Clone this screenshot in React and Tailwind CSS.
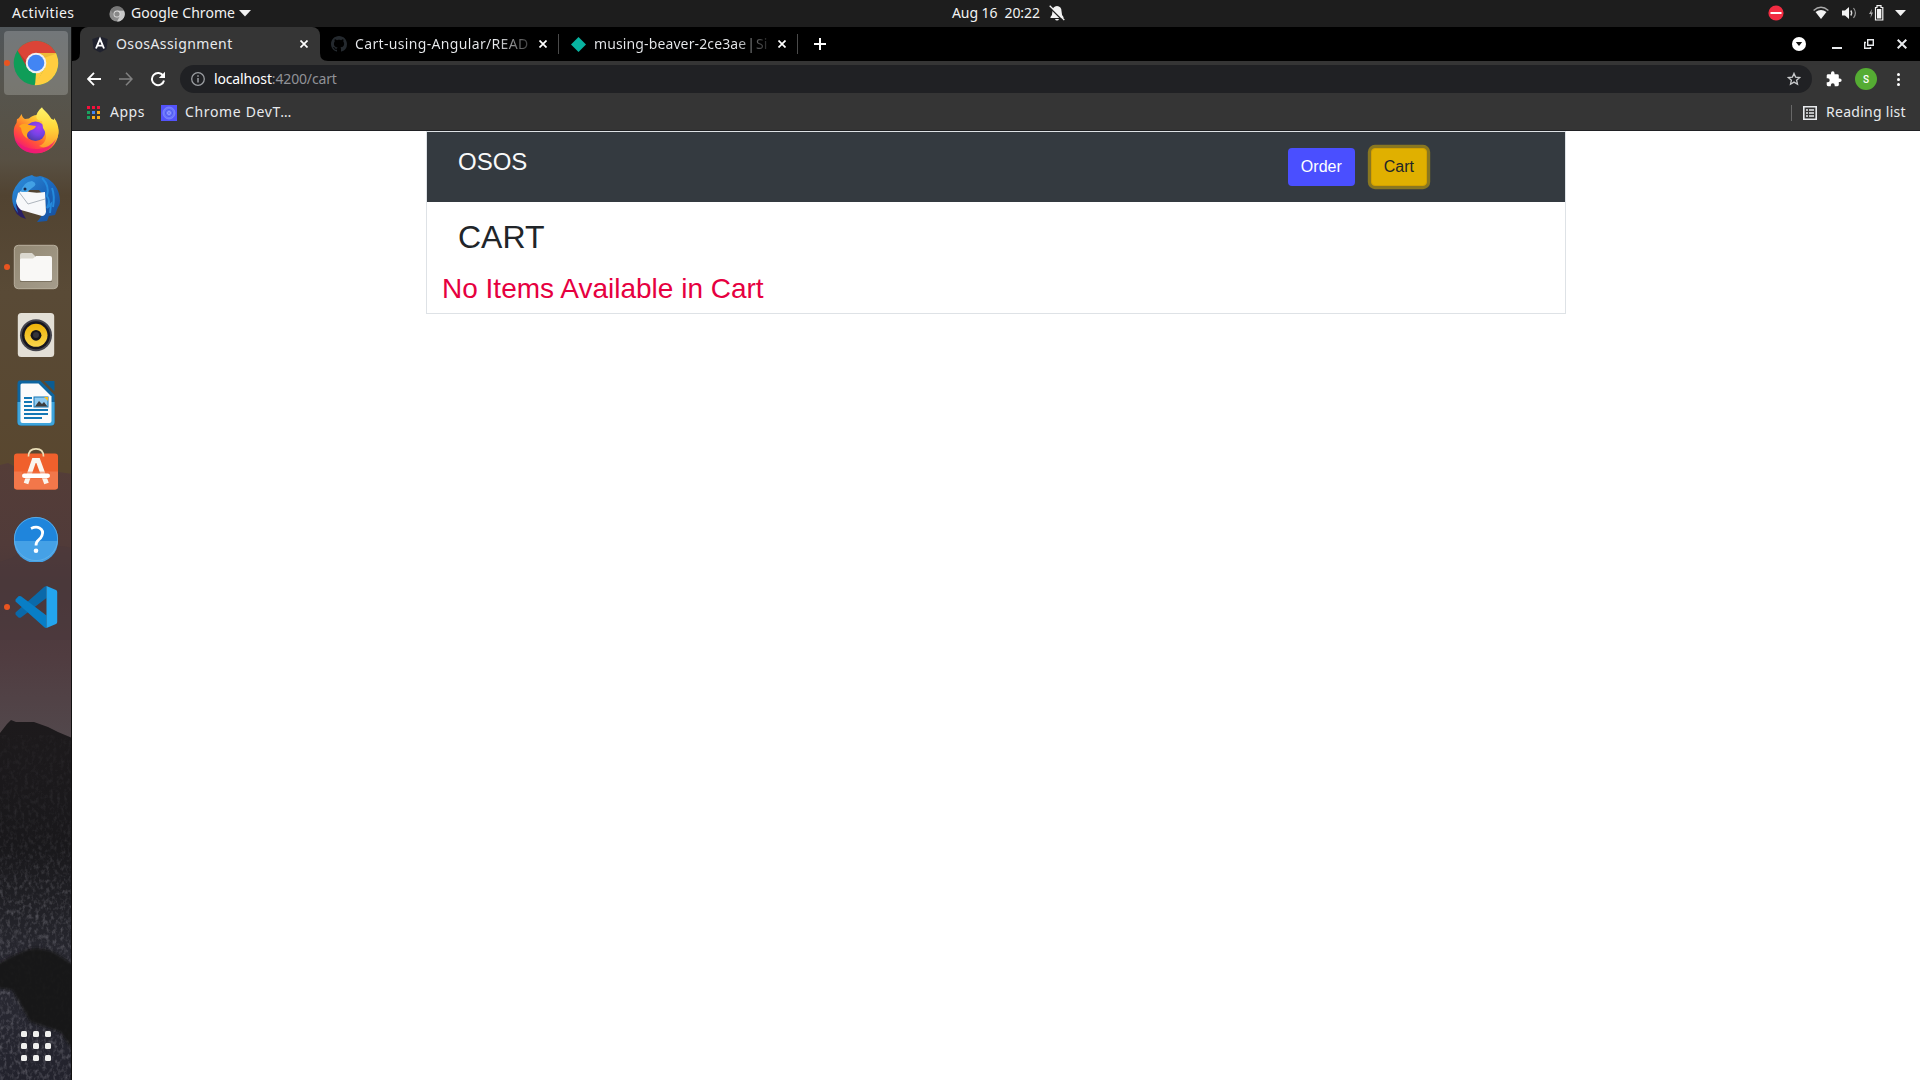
import React from "react";

const ui = "font-['Noto_Sans',sans-serif]";

function Wallpaper() {
  return (
    <svg className="absolute inset-0" width="72" height="1053" viewBox="0 27 72 1053" preserveAspectRatio="none">
      <defs>
        <linearGradient id="sky" x1="0" y1="27" x2="0" y2="470" gradientUnits="userSpaceOnUse">
          <stop offset="0" stopColor="#50565a" />
          <stop offset="0.13" stopColor="#56554e" />
          <stop offset="0.3" stopColor="#585043" />
          <stop offset="0.38" stopColor="#514331" />
          <stop offset="0.6" stopColor="#594a36" />
          <stop offset="1" stopColor="#59472f" />
        </linearGradient>
        <linearGradient id="haze" x1="0" y1="460" x2="0" y2="740" gradientUnits="userSpaceOnUse">
          <stop offset="0" stopColor="#543d38" />
          <stop offset="0.3" stopColor="#513b39" />
          <stop offset="0.45" stopColor="#4a3839" />
          <stop offset="0.7" stopColor="#503c40" />
          <stop offset="1" stopColor="#52484c" />
        </linearGradient>
        <linearGradient id="rock" x1="0" y1="720" x2="0" y2="1080" gradientUnits="userSpaceOnUse">
          <stop offset="0" stopColor="#1d1a1c" />
          <stop offset="0.35" stopColor="#19181b" />
          <stop offset="0.55" stopColor="#222228" />
          <stop offset="0.7" stopColor="#2a2a33" />
          <stop offset="1" stopColor="#22222c" />
        </linearGradient>
        <linearGradient id="fade" x1="0" y1="735" x2="0" y2="1080" gradientUnits="userSpaceOnUse">
          <stop offset="0" stopColor="#fff" stopOpacity=".08" />
          <stop offset="0.3" stopColor="#fff" stopOpacity=".2" />
          <stop offset="0.5" stopColor="#fff" stopOpacity=".5" />
          <stop offset="1" stopColor="#fff" stopOpacity=".55" />
        </linearGradient>
        <mask id="grainMask"><rect y="735" width="72" height="345" fill="url(#fade)" /></mask>
        <filter id="grain" x="0" y="0" width="100%" height="100%">
          <feTurbulence type="fractalNoise" baseFrequency="0.28 0.2" numOctaves="3" seed="4" />
          <feColorMatrix values="0 0 0 0 0.42  0 0 0 0 0.41  0 0 0 0 0.46  1.5 0 0 0 -0.68" />
        </filter>
        <filter id="soft"><feGaussianBlur stdDeviation="1.6" /></filter>
      </defs>
      <rect y="27" width="72" height="453" fill="url(#sky)" />
      <path d="M0 465 L8 463 L14 466 L30 470 L45 470 L72 474 V760 H0Z" fill="url(#haze)" />
      <path d="M0 562 L12 558 L20 553 L50 550 L60 546 L72 548 V640 H0Z" fill="#4a373b" opacity=".5" />
      <path d="M0 733 L7 724 L11 720 L16 722 L34 722 L48 727 L58 732 L72 738 V1080 H0Z" fill="url(#rock)" />
      <g mask="url(#grainMask)"><rect y="735" width="72" height="345" filter="url(#grain)" /></g>
      <path d="M-4 964 L12 956 L28 949 L38 948 L52 951 L62 957 L76 966 V1055 L60 1032 L30 1022 L20 1004 L12 990 L-4 988Z" fill="#181719" opacity=".92" filter="url(#soft)" />
    </svg>
  );
}

function ChromeIcon() {
  return (
    <svg width="46" height="46" viewBox="-23 -23 46 46">
      <defs>
        <clipPath id="cc"><circle r="22.3" /></clipPath>
        <linearGradient id="cr" x1="0" y1="0" x2="0" y2="1"><stop stopColor="#db4437" /><stop offset=".7" stopColor="#db4437" /><stop offset="1" stopColor="#bf3a2e" /></linearGradient>
      </defs>
      <g clipPath="url(#cc)">
        <rect x="-23" y="-23" width="46" height="46" fill="#0f9d58" />
        <path d="M0 -10 H23 V23 H-2 L8.7 5Z" fill="#ffcd40" />
        <path d="M-1 23 L8.7 5 L0 10 L-1 23Z" fill="#ffcd40" />
        <path d="M-23 -23 H23 V-10 H0 L-8.7 5 L-18.2 -12Z" fill="url(#cr)" />
        <path d="M0 -10 H22 L8 -5Z" fill="#d9a52e" opacity=".45" />
        <path d="M-18.2 -12 L-8.7 5 L-10 -2Z" fill="#8e2b22" opacity=".4" />
      </g>
      <circle r="10.3" fill="#f1f1f1" />
      <circle r="8.3" fill="#4285f4" />
    </svg>
  );
}

function FirefoxIcon() {
  return (
    <svg width="48" height="48" viewBox="12 107 48 48">
      <defs>
        <linearGradient id="ff1" x1=".85" y1=".1" x2=".2" y2=".95"><stop stopColor="#fff44f" /><stop offset=".3" stopColor="#ffb52e" /><stop offset=".58" stopColor="#ff6a2b" /><stop offset=".8" stopColor="#ff3750" /><stop offset="1" stopColor="#e31587" /></linearGradient>
        <radialGradient id="ff2" cx=".65" cy=".3" r=".8"><stop stopColor="#a73df5" /><stop offset=".5" stopColor="#7542e5" /><stop offset="1" stopColor="#483a9e" /></radialGradient>
        <linearGradient id="ff3" x1="0" y1="0" x2="0" y2="1"><stop stopColor="#fff36b" /><stop offset=".5" stopColor="#ffd83a" /><stop offset="1" stopColor="#ff9a2a" /></linearGradient>
      </defs>
      <path d="M21.5 114 Q22.5 118 25 119 L29 118.5 Q33 114.5 38 115 L47 117 L54 120 Q59 127 58.5 133 C57.5 145 48 153.3 36 153.3 C23 153.3 14 144 13.8 132 C13.5 128 15 125 16.5 123 L17 119 Q19 119 21.5 114Z" fill="url(#ff1)" />
      <circle cx="35.5" cy="131.3" r="9.8" fill="url(#ff2)" />
      <path d="M42 107.2 C43 110 51 115 52.5 122 Q54 122 54 118 C60 125 60 137 54 143 C51 146 46 149 39 146 C47 143 48 135 43 128 L42 121 C35 121 34 114 42 107.2Z" fill="url(#ff3)" />
      <path d="M19 126 Q24 122 29 125 L36 126 Q35 129 30 130.5 Q25 134 28 139 Q22 136 21 128Z" fill="#ffa51f" />
      <path d="M14.5 139 Q24 150 38 149 Q50 148 56 139 Q50 153.3 36 153.3 Q20 153 14.5 139Z" fill="#ed1579" opacity=".75" />
    </svg>
  );
}

function ThunderbirdIcon() {
  return (
    <svg width="50" height="50" viewBox="11 174 50 50">
      <defs>
        <linearGradient id="tb" x1="0" y1="0" x2="1" y2="1"><stop stopColor="#2f91dc" /><stop offset=".5" stopColor="#1c68bd" /><stop offset="1" stopColor="#164c99" /></linearGradient>
      </defs>
      <path d="M20 185 Q12 194 13 204 Q14 216 26 219 L22 212Z" fill="#2a1f62" />
      <path d="M26 177 L32 175 Q35 178 40 176 C52 178 60 189 60 201 C60 205 58 207 58 207 L55 215 L49 216 L47 221 L37 222 L46 210 Q45 195 39 190 L29 190 L21 195 L16 205 L18 213 Q10 204 13 192 Q18 180 26 177Z" fill="url(#tb)" />
      <path d="M18 193 L23 190 Q32 194 45 192 L46 212 Q45 216 42 216 L21 210 Q17 207 16 201Z" fill="#f7f8fa" />
      <path d="M19 192 L28 204 L45 199" fill="none" stroke="#aeb5bd" strokeWidth="1" />
      <path d="M21 192 Q23 182 32 181 Q39 184 32 188 L27 192Z" fill="#42a1e5" />
      <circle cx="25" cy="189" r="1.5" fill="#192747" />
      <path d="M42 178 Q50 186 47 196 Q51 201 47 208 L51 204 L50 213 M52 188 Q55 196 53 207" fill="none" stroke="#258adc" strokeWidth="2" />
    </svg>
  );
}

function FilesIcon() {
  return (
    <svg width="46" height="46" viewBox="13 244 46 46">
      <defs><linearGradient id="fi" x1="0" y1="0" x2="1" y2="1"><stop stopColor="#928873" /><stop offset="1" stopColor="#a59c8b" /></linearGradient></defs>
      <rect x="14.3" y="245.3" width="43.4" height="43.4" rx="4" fill="url(#fi)" stroke="#b9b09e" strokeWidth="1" />
      <path d="M20 256 V255 Q20 253 22 253 H32 L35 256 V262 H20Z" fill="#dbd8cf" />
      <path d="M20 260 Q20 258 22 258.500 H33 L36 256 H50 Q52 256 52 258 V279 Q52 281 50 281 H22 Q20 281 20 279Z" fill="#f9f8f6" />
      <path d="M20 281.500 H52" stroke="#6e6554" opacity=".7" />
    </svg>
  );
}

function RhythmboxIcon() {
  return (
    <svg width="40" height="46" viewBox="16 312 40 46">
      <defs><linearGradient id="rb" x1="0" y1="0" x2="0" y2="1"><stop stopColor="#eeb208" /><stop offset="1" stopColor="#fad64c" /></linearGradient></defs>
      <rect x="17.800" y="313" width="36.400" height="44" rx="3.500" fill="#e3dfd6" />
      <circle cx="36" cy="335.300" r="16" fill="#45454d" />
      <circle cx="36" cy="335.300" r="14" fill="#17161f" />
      <circle cx="36" cy="335.300" r="11.500" fill="url(#rb)" />
      <circle cx="36" cy="335.300" r="5.400" fill="#15151a" />
      <circle cx="36" cy="335" r="3" fill="#34343a" />
    </svg>
  );
}

function WriterIcon() {
  return (
    <svg width="40" height="48" viewBox="16 379 40 48">
      <path d="M20 380.500 H40 L54.500 395 V422 Q54.500 425.500 51 425.500 H21 Q17.500 425.500 17.500 422 V384 Q17.500 380.500 20 380.500Z" fill="#0d65a0" />
      <path d="M17.500 402 H54.500 V422 Q54.500 425.500 51 425.500 H21 Q17.500 425.500 17.500 422Z" fill="#3da4dc" />
      <path d="M44 381 H54.500 V391.500Z" fill="#0b5c92" />
      <path d="M20.500 385 Q20.500 383.500 22 383.500 H38.500 L51.500 396.500 V421 Q51.500 423 49.500 423 H22.500 Q20.500 423 20.500 421Z" fill="#fbfbfb" />
      <path d="M24 398 H32 M24 402 H32 M24 406 H32 M24 410 H48 M24 414 H48 M24 418 H42" stroke="#1377b5" strokeWidth="1.800" />
      <rect x="34" y="397" width="14" height="10" fill="#8fcaf0" stroke="#1377b5" />
      <path d="M35 406.500 L39 401 L42 404 L44 402 L47.500 406.500Z" fill="#3d3d3d" />
      <path d="M44 397 H48 V401Z" fill="#f7be20" />
    </svg>
  );
}

function SoftwareIcon() {
  return (
    <svg width="46" height="46" viewBox="13 447.500 46 46">
      <rect x="14" y="453" width="44" height="36" rx="3" fill="#f0602c" />
      <path d="M14 471 H58 V486 Q58 489 55 489 H17 Q14 489 14 486Z" fill="#f2774a" />
      <path d="M28.500 456 Q28.500 448.400 36 448.400 Q43.500 448.400 43.500 456" fill="none" stroke="#eadfb8" strokeWidth="1.700" />
      <path d="M26 483 L34 460 H38 L46.500 483" fill="none" stroke="#faf5ee" strokeWidth="4.800" />
      <path d="M22 474.600 H50" stroke="#f05f2c" strokeWidth="7" opacity=".5" />
      <rect x="22" y="473" width="28" height="4.500" rx="2.200" fill="#fff" />
    </svg>
  );
}

function HelpIcon() {
  return (
    <svg width="46" height="46" viewBox="13 516 46 46">
      <circle cx="36" cy="539" r="22" fill="#1f85dc" />
      <path d="M14 541 H58 A22 22 0 0 1 14 541Z" fill="#45a1e6" />
      <circle cx="36" cy="539" r="21.600" fill="none" stroke="#66b4ea" strokeWidth=".8" />
      <path d="M31 528.500 Q36 526.200 39.500 528 Q44 530.500 42 535.500 Q41 538 38.500 540 Q36 542 36 545.500" fill="none" stroke="#fff" strokeWidth="2.800" />
      <circle cx="36" cy="550.700" r="2.300" fill="#fff" />
    </svg>
  );
}

function CodeIcon() {
  return (
    <svg width="44" height="44" viewBox="14 585 44 44">
      <path d="M15.500 614.500 L18.500 617.500 Q19.500 618.200 21 617.500 L46.500 598 V586 Q45 586 43.500 587.500 L15.500 612.500Z" fill="#0a69a9" />
      <path d="M15.500 599.500 L18.500 596.300 Q19.500 595.500 21 596.300 L46.500 615.500 V628 Q45 628 43.500 626.500 L15.500 601.500Z" fill="#087ec6" />
      <path d="M46.500 586 L56 590 Q57.200 590.500 57.200 592 V622 Q57.200 623.500 56 624 L46.500 628Z" fill="#23a5ee" />
    </svg>
  );
}

const dock = [
  { icon: ChromeIcon, on: true, active: true },
  { icon: FirefoxIcon },
  { icon: ThunderbirdIcon },
  { icon: FilesIcon, on: true },
  { icon: RhythmboxIcon },
  { icon: WriterIcon },
  { icon: SoftwareIcon },
  { icon: HelpIcon },
  { icon: CodeIcon, on: true },
];

function Dock() {
  return (
    <aside className="relative flex h-full w-[72px] shrink-0 flex-col justify-between overflow-hidden border-r border-[#111] bg-[#222]">
      <Wallpaper />
      <div className="relative flex w-[72px] flex-col gap-1 px-1 pt-1">
        {dock.map(({ icon: Icon, on, active }, i) => (
          <div key={i} className={active ? "relative flex h-16 items-center justify-center rounded bg-white/20" : "relative flex h-16 items-center justify-center"}>
            {on && <span className="absolute top-[29px] left-0 size-1.5 rounded-full bg-[#e95420]" />}
            <Icon />
          </div>
        ))}
      </div>
      <div className="relative mb-[19px] ml-[21px] grid w-[30px] grid-cols-3 gap-1.5">
        {Array.from({ length: 9 }, (_, i) => (
          <span key={i} className="size-1.5 rounded-[1.5px] bg-[#f0f0ee]" />
        ))}
      </div>
    </aside>
  );
}

function TopBar() {
  return (
    <header className="grid h-[27px] shrink-0 grid-cols-[952px_auto_1fr] items-center bg-[#1d1d1d] text-[14px] leading-5 text-[#f2f2f2]">
      <div className="flex items-center pl-3">
        <span className="w-[62px] pb-0.5 tracking-[0.4px] whitespace-nowrap">Activities</span>
        <svg className="ml-[35px]" width="16" height="16" viewBox="0 0 16 16">
          <circle cx="8" cy="8" r="7.600" fill="#8b8b8b" />
          <path d="M8 4.500 H15 A7.600 7.600 0 0 1 8 15.600 L11 10Z" fill="#c9c9c9" />
          <path d="M1.500 4 A7.600 7.600 0 0 1 15 4.500 H8 L5 9Z" fill="#777" />
          <circle cx="8" cy="8" r="3.500" fill="#ddd" /><circle cx="8" cy="8" r="2.600" fill="#888" />
        </svg>
        <span className="ml-1.5 w-[104px] pb-0.5 tracking-[0.05px] whitespace-nowrap">Google Chrome</span>
        <svg className="ml-1" width="12" height="7" viewBox="0 0 12 7"><path d="M0 0H12L6 6.500Z" fill="#f2f2f2" /></svg>
      </div>
      <div className="flex items-center">
        <span className="w-[88px] pb-0.5 tracking-[-0.08px] whitespace-pre">Aug 16  20:22</span>
        <svg className="mb-px ml-[9px]" width="16" height="16" viewBox="0 0 16 16">
          <path d="M8 1 Q12.500 1.500 12.500 6 Q12.500 10 14.500 12 V13 H1.500 V12 Q3.500 10 3.500 6 Q3.500 1.500 8 1Z M6 14 H10 Q9.500 15.500 8 15.500 Q6.500 15.500 6 14Z" fill="#f2f2f2" />
          <path d="M0 1.700 L14 15.700" stroke="#1d1d1d" strokeWidth="1.500" /><path d="M.7 .7 L15.300 15" stroke="#f2f2f2" strokeWidth="1.300" />
        </svg>
      </div>
      <div className="flex items-center justify-end pr-3.5 pb-px">
        <svg width="16" height="16" viewBox="0 0 16 16"><circle cx="8" cy="8" r="7.600" fill="#f22c42" /><path d="M2.500 8H13.500" stroke="#fff" strokeWidth="2" /></svg>
        <svg className="ml-[29px]" width="16" height="14" viewBox="0 0 16 14">
          <path d="M.6 4.500 Q8 -2 15.400 4.500" fill="none" stroke="#aaa" strokeWidth="1.400" /><path d="M2.500 6 Q8 1.800 13.500 6 L8 13Z" fill="#f2f2f2" />
        </svg>
        <svg className="ml-[13px]" width="15" height="14" viewBox="0 0 15 14">
          <path d="M0 4.500H3L7 1V13L3 9.500H0Z" fill="#f2f2f2" /><path d="M8.800 4.500Q10.600 7 8.800 9.500" stroke="#ddd" strokeWidth="1.300" fill="none" /><path d="M11.500 2Q15.300 7 11.500 12" stroke="#999" strokeWidth="1.200" fill="none" />
        </svg>
        <svg className="ml-[12px]" width="15" height="16" viewBox="0 0 15 16">
          <path d="M3 4L0 9H2L1.500 13L4 7.500H2.300Z" fill="#aaa" /><path d="M6.500 2.500H8V.7H12V2.500H13.800V15H6.500Z" fill="none" stroke="#f2f2f2" strokeWidth="1.200" /><path d="M8 4H12.300V13.500H8Z" fill="#f2f2f2" />
        </svg>
        <svg className="ml-[11px]" width="11" height="7" viewBox="0 0 11 7"><path d="M0 0H11L5.500 6Z" fill="#f2f2f2" /></svg>
      </div>
    </header>
  );
}

function Cross({ className }) {
  return (
    <svg className={className} width="8" height="8" viewBox="0 0 8 8"><path d="M.5 .5L7.500 7.500M7.500 .5L.5 7.500" stroke="#fff" strokeWidth="1.700" /></svg>
  );
}

function TabStrip() {
  return (
    <div className="flex h-[34px] items-center bg-black pl-2 text-[14px] leading-5 text-[#e8eaed]">
      <div className="relative flex h-full w-60 items-center rounded-t-lg bg-[#353535] pr-3 pl-3">
        <svg className="absolute bottom-0 -left-2" width="8" height="8"><path d="M8 0V8H0Q8 8 8 0Z" fill="#353535" /></svg>
        <svg className="absolute -right-2 bottom-0" width="8" height="8"><path d="M0 0V8H8Q0 8 0 0Z" fill="#353535" /></svg>
        <svg width="16" height="17" viewBox="0 0 16 17">
          <path d="M8 .5L15.700 3L14.500 13L8 16.600L1.500 13L.3 3Z" fill="#20222e" />
          <path d="M4 12.500L8 3L12 12.500M5.700 9.600H10.300" fill="none" stroke="#fff" strokeWidth="1.900" />
        </svg>
        <span className="ml-2 flex-1 pb-px tracking-[0.42px] whitespace-nowrap">OsosAssignment</span>
        <Cross />
      </div>
      <div className="flex w-[238px] items-center pl-[11px]">
        <svg width="16" height="16" viewBox="0 0 16 16"><path fill="#24292e" d="M8 0C3.580 0 0 3.580 0 8c0 3.540 2.290 6.530 5.470 7.590.4.070.55-.17.55-.38 0-.19-.01-.82-.01-1.490-2.010.37-2.530-.49-2.690-.94-.09-.23-.48-.94-.82-1.130-.28-.15-.68-.52-.01-.53.63-.01 1.080.58 1.230.82.72 1.210 1.870.87 2.330.66.070-.52.28-.87.51-1.070-1.780-.2-3.640-.89-3.640-3.950 0-.87.31-1.590.82-2.150-.08-.2-.36-1.020.08-2.120 0 0 .67-.21 2.200.82.64-.18 1.320-.27 2-.27s1.360.09 2 .27c1.530-1.040 2.200-.82 2.200-.82.44 1.100.16 1.920.08 2.120.51.56.82 1.270.82 2.150 0 3.070-1.870 3.750-3.650 3.950.29.25.54.73.54 1.480 0 1.070-.01 1.930-.01 2.200 0 .21.15.46.55.38A8.010 8.010 0 0 0 16 8c0-4.420-3.580-8-8-8z" /></svg>
        <span className="ml-2 w-[176px] bg-linear-to-r from-[#e8eaed] from-80% to-[#333] bg-clip-text pb-px tracking-[0.34px] whitespace-nowrap text-transparent">Cart-using-Angular/READ</span>
        <Cross className="ml-2" />
      </div>
      <span className="h-5 w-px bg-[#4a4a4a]" />
      <div className="flex w-[238px] items-center pl-[12px]">
        <svg width="15" height="15" viewBox="0 0 15 15"><path d="M7.500 0L15 7.500L7.500 15L0 7.500Z" fill="#08b3a0" /></svg>
        <span className="ml-2 w-[176px] bg-linear-to-r from-[#e8eaed] from-80% to-[#1c1c1c] bg-clip-text pb-px tracking-[0.12px] [word-spacing:-2.8px] whitespace-nowrap text-transparent">musing-beaver-2ce3ae | Si</span>
        <Cross className="ml-2" />
      </div>
      <span className="h-5 w-px bg-[#4a4a4a]" />
      <svg className="ml-4" width="12" height="12" viewBox="0 0 12 12"><path d="M6 0V12M0 6H12" stroke="#fff" strokeWidth="2" /></svg>
      <div className="ml-auto flex items-center pr-[13px]">
        <svg width="14" height="14" viewBox="0 0 14 14"><circle cx="7" cy="7" r="7" fill="#fff" /><path d="M3.800 5H10.200L7 9Z" fill="#111" /></svg>
        <span className="mt-[7px] ml-[26px] h-0.5 w-2.5 bg-[#e8eaed]" />
        <svg className="ml-[22px]" width="10" height="10" viewBox="0 0 10 10"><path d="M3.700 .7H9.300V6.300H3.700ZM2 3.500H.7V9.300H6.500V8" fill="none" stroke="#e8eaed" strokeWidth="1.400" /></svg>
        <svg className="ml-[23px]" width="10" height="10" viewBox="0 0 10 10"><path d="M.7 .7L9.300 9.300M9.300 .7L.7 9.300" stroke="#e8eaed" strokeWidth="2" /></svg>
      </div>
    </div>
  );
}

function AddressBar() {
  return (
    <div className="flex h-9 items-center pr-5 pl-[15px]">
      <svg width="14" height="14" viewBox="0 0 14 14"><path d="M14 7H1.500M7 .8L1 7L7 13.200" fill="none" stroke="#fff" strokeWidth="1.800" /></svg>
      <svg className="ml-[18px]" width="14" height="14" viewBox="0 0 14 14"><path d="M0 7H12.500M7 .8L13 7L7 13.200" fill="none" stroke="#818181" strokeWidth="1.600" /></svg>
      <svg className="ml-[17px]" width="16" height="16" viewBox="0 0 16 16"><path d="M13.300 5A6.100 6.100 0 1 0 14 9.500" fill="none" stroke="#fff" strokeWidth="2" /><path d="M15 .8V7H8.800Z" fill="#fff" /></svg>
      <div className="ml-[14px] flex h-7 w-[1632px] items-center rounded-full bg-[#202124] pr-[11px] pl-[11px]">
        <svg width="14" height="14" viewBox="0 0 14 14"><circle cx="7" cy="7" r="6.300" fill="none" stroke="#9a9da1" strokeWidth="1.300" /><path d="M7 6V10.500M7 3.300V4.800" stroke="#9a9da1" strokeWidth="1.500" /></svg>
        <span className="ml-[9px] flex-1 pb-px text-[14px] leading-5 tracking-[-0.15px] text-[#909297]"><span className="text-white">localhost</span>:4200/cart</span>
        <svg width="14" height="14" viewBox="0 0 14 14"><path d="M7 1.400L8.600 5.100L12.700 5.500L9.600 8.200L10.500 12.200L7 10.100L3.500 12.200L4.400 8.200L1.300 5.500L5.400 5.100Z" fill="none" stroke="#c8cacc" strokeWidth="1.300" /></svg>
      </div>
      <svg className="ml-[14px]" width="16" height="16" viewBox="1.500 .5 21.500 22.500"><path fill="#fff" d="M20.500 11H19V7a2 2 0 0 0-2-2h-4V3.500a2.500 2.500 0 0 0-5 0V5H4a2 2 0 0 0-2 2v3.800h1.500a2.700 2.700 0 0 1 0 5.400H2V20a2 2 0 0 0 2 2h3.800v-1.500a2.700 2.700 0 0 1 5.400 0V22H17a2 2 0 0 0 2-2v-4h1.500a2.500 2.500 0 0 0 0-5z" /></svg>
      <span className="ml-[13px] flex size-[22px] items-center justify-center rounded-full bg-[#55ac33] font-['Roboto',sans-serif] text-[10px] font-medium text-white">S</span>
      <span className="ml-auto flex flex-col gap-0.5">
        <i className="size-[3px] rounded-full bg-white" /><i className="size-[3px] rounded-full bg-white" /><i className="size-[3px] rounded-full bg-white" />
      </span>
    </div>
  );
}

const appDots = ["#f4113c", "#f4113c", "#f4113c", "#1ba260", "#4285f4", "#fbac18", "#1ba260", "#fbac18", "#fbac18"];

function Bookmarks() {
  return (
    <div className="flex h-[33px] items-center pr-[14px] pb-0.5 pl-[15px] text-[14px] leading-5 text-[#e8eaed]">
      <span className="grid grid-cols-3 gap-x-0.5 gap-y-[2px]">
        {appDots.map((c, i) => <i key={i} className="size-[3px]" style={{ background: c }} />)}
      </span>
      <span className="ml-[10px] w-[35px] pb-0.5 tracking-[0.5px]">Apps</span>
      <svg className="ml-4" width="16" height="16" viewBox="0 0 16 16"><rect width="16" height="16" fill="#5353fb" /><circle cx="8" cy="8" r="6" fill="#6b78fb" stroke="#8189ff" strokeWidth=".8" /><circle cx="8" cy="8" r="3.500" fill="none" stroke="#4c54f0" strokeWidth="1" /><circle cx="8" cy="8" r="1.500" fill="none" stroke="#949cff" /></svg>
      <span className="ml-2 pb-0.5 tracking-[0.65px] whitespace-nowrap">Chrome DevT…</span>
      <span className="ml-auto h-4 w-px bg-[#686868]" />
      <svg className="ml-[11px]" width="14" height="14" viewBox="0 0 14 14"><path d="M.8 .8H13.200V13.200H.8Z" fill="none" stroke="#e8eaed" strokeWidth="1.600" /><path d="M3 4H5M6 4H11M3 7H5M6 7H11M3 10H5M6 10H11" stroke="#e8eaed" strokeWidth="1.500" /></svg>
      <span className="ml-[9px] w-20 pb-0.5 tracking-[0.28px] whitespace-nowrap">Reading list</span>
    </div>
  );
}

function CartPage() {
  return (
    <main className="flex-1 bg-white font-['Liberation_Sans',Arial,sans-serif] text-[#212529]">
      <div className="ml-[354px] w-[1140px] border border-[#dee2e6]">
        <div className="flex h-[70px] items-start justify-between bg-[#343a40] py-4 pr-[138px] pl-[31px]">
          <h4 className="text-2xl leading-[28.8px] text-[#f8f9fa]">OSOS</h4>
          <div className="flex gap-4">
            <button className="h-[38px] rounded bg-[#4a4fff] px-[13px] text-base text-white">Order</button>
            <button className="h-[38px] rounded border border-[#d3a000] bg-[#e0b000] px-3 text-base text-[#212529] shadow-[0_0_0_3.2px_rgba(222,180,0,0.5)]">Cart</button>
          </div>
        </div>
        <h2 className="mt-4 ml-[31px] text-[32px] leading-[38.4px]">CART</h2>
        <h3 className="mt-4 mb-[7px] ml-[15px] text-[28px] leading-[33.6px] text-[#e6003f]">No Items Available in Cart</h3>
      </div>
    </main>
  );
}

export default function App() {
  return (
    <div className={`${ui} flex h-[1080px] w-[1920px] flex-col overflow-hidden bg-black`}>
      <TopBar />
      <div className="flex min-h-0 flex-1">
        <Dock />
        <div className="flex min-w-0 flex-1 flex-col">
          <TabStrip />
          <div className="h-[70px] border-b border-[#202124] bg-[#353535]">
            <AddressBar />
            <Bookmarks />
          </div>
          <CartPage />
        </div>
      </div>
    </div>
  );
}
